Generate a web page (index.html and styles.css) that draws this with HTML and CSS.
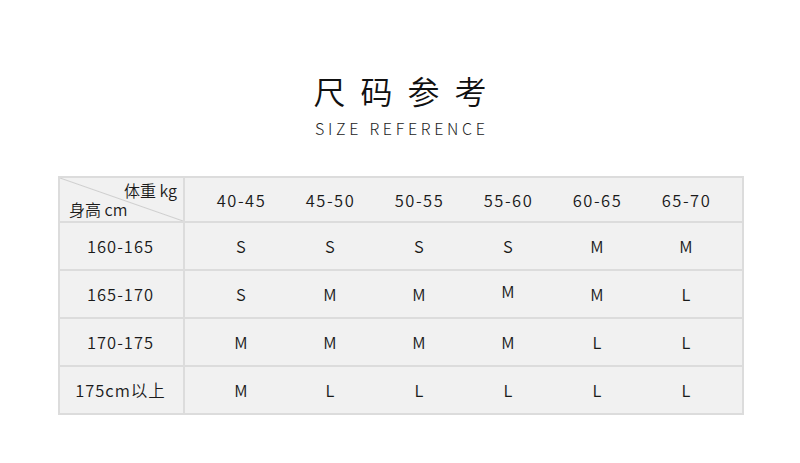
FILE: index.html
```html
<!DOCTYPE html>
<html lang="zh">
<head>
<meta charset="utf-8">
<title>尺码参考</title>
<link rel="stylesheet" href="styles.css">
</head>
<body>
<main class="page">
  <h1 class="title">尺码参考</h1>
  <p class="subtitle">SIZE REFERENCE</p>
  <div class="chart">
    <div class="row head">
      <div class="key corner">
        <span class="corner-top">体重 kg</span>
        <span class="corner-bottom">身高 cm</span>
      </div>
      <div class="vals">
        <span>40-45</span><span>45-50</span><span>50-55</span><span>55-60</span><span>60-65</span><span>65-70</span>
      </div>
    </div>
    <div class="row">
      <div class="key">160-165</div>
      <div class="vals"><span>S</span><span>S</span><span>S</span><span>S</span><span>M</span><span>M</span></div>
    </div>
    <div class="row">
      <div class="key">165-170</div>
      <div class="vals"><span>S</span><span>M</span><span>M</span><span class="raised">M</span><span>M</span><span>L</span></div>
    </div>
    <div class="row">
      <div class="key">170-175</div>
      <div class="vals"><span>M</span><span>M</span><span>M</span><span>M</span><span>L</span><span>L</span></div>
    </div>
    <div class="row last">
      <div class="key">175cm以上</div>
      <div class="vals"><span>M</span><span>L</span><span>L</span><span>L</span><span>L</span><span>L</span></div>
    </div>
  </div>
</main>
</body>
</html>
```
FILE: styles.css
```css
* { box-sizing: border-box; }
html, body { margin: 0; padding: 0; background: #ffffff; }
body {
  font-family: "Noto Sans CJK SC", "Noto Sans", sans-serif;
  font-weight: 350;
  color: #1a1a1a;
}
.page {
  width: 800px;
  height: 463px;
  display: flex;
  flex-direction: column;
  align-items: center;
  padding-top: 70px;
}
.title {
  margin: 0;
  font-size: 32px;
  font-weight: 350;
  line-height: 40px;
  letter-spacing: 15px;
  padding-left: 15px;
  color: #111111;
}
.subtitle {
  margin: 8px 0 0;
  font-family: "Noto Sans CJK SC", "Noto Sans", sans-serif;
  font-size: 16px;
  font-weight: 300;
  line-height: 20px;
  letter-spacing: 3.7px;
  padding-left: 3.7px;
  color: #222222;
}
.chart {
  margin-top: 38px;
  margin-left: 2px;
  width: 686px;
  border: 2px solid #dcdcdc;
  background: #f1f1f1;
  display: flex;
  flex-direction: column;
}
.row {
  display: flex;
  height: 48px;
  border-bottom: 2px solid #dcdcdc;
  font-size: 16.5px;
  letter-spacing: 1px;
}
.row.head { height: 45px; letter-spacing: 1.5px; }
.row.last { height: 46px; border-bottom: 0; }
.key {
  width: 125px;
  flex: none;
  border-right: 2px solid #dcdcdc;
  display: flex;
  align-items: center;
  justify-content: center;
  padding-right: 2px;
}
.vals {
  display: grid;
  grid-template-columns: repeat(6, 89px);
  padding-left: 12px;
  align-items: center;
}
.vals span { text-align: center; }
.vals .raised { position: relative; top: -3px; }
.corner {
  position: relative;
  display: flex;
  flex-direction: column;
  align-items: stretch;
  justify-content: center;
  padding: 0 6px 0 9px;
  font-size: 16px;
  letter-spacing: 0;
  line-height: 19px;
  background: linear-gradient(to top right, transparent calc(50% - 1px), #cfcfcf 50%, transparent calc(50% + 1px));
}
.corner-top { text-align: right; }
.corner-bottom { text-align: left; }
```
